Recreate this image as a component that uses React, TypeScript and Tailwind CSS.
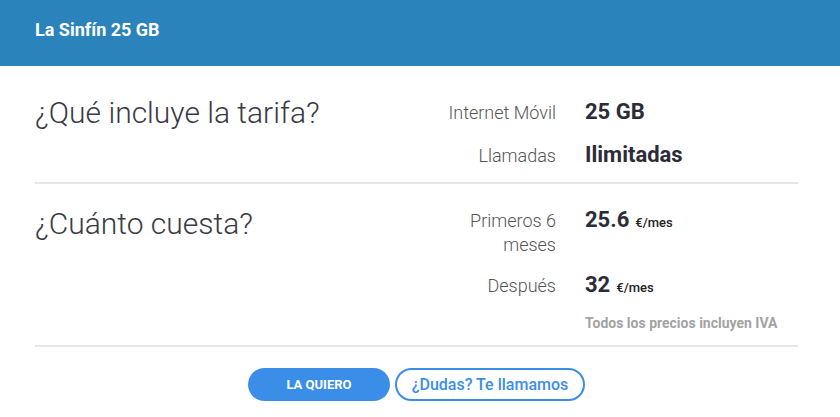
const BLUE = 'bg-[#3b8ee8]';

function Row({ label, children, className = '' }: { label: React.ReactNode; children: React.ReactNode; className?: string }) {
  return (
    <div className={`flex items-baseline ${className}`}>
      <span className="w-[136px] shrink-0 text-right text-[18px] leading-[24px] font-light text-[#555]">{label}</span>
      <div className="ml-[29px] flex items-baseline gap-[6px]">{children}</div>
    </div>
  );
}

function Value({ value, unit }: { value: string; unit?: string }) {
  return (
    <>
      <span className="text-[22px] leading-[28px] font-bold text-[#2c2c39]">{value}</span>
      {unit && <span className="text-[13px] font-medium text-[#222]">{unit}</span>}
    </>
  );
}

export default function App() {
  return (
    <div className="h-[417px] w-[840px] overflow-hidden bg-white font-['Roboto',sans-serif]">
      <header className="flex h-[66px] items-center bg-[#2b83bb] px-[35px] pb-[8px]">
        <h1 className="text-[18px] font-bold text-white">La Sinfín 25 GB</h1>
      </header>

      <div className="pl-[35px] pr-[42px]">
        <section className="flex border-b-2 border-[#e6e6e6] pt-[29px] pb-[13px]">
          <h2 className="flex-1 text-[30px] leading-[36px] font-light text-[#3a3a46]">¿Qué incluye la tarifa?</h2>
          <div className="mt-[3px] flex w-[378px] flex-col gap-[15px]">
            <Row label="Internet Móvil">
              <Value value="25 GB" />
            </Row>
            <Row label="Llamadas">
              <Value value="Ilimitadas" />
            </Row>
          </div>
        </section>

        <section className="flex border-b-2 border-[#e6e6e6] pt-[22px] pb-[14px]">
          <h2 className="flex-1 text-[30px] leading-[36px] font-light text-[#3a3a46]">¿Cuánto cuesta?</h2>
          <div className="flex w-[378px] flex-col">
            <Row label={<>Primeros 6<br />meses</>}>
              <Value value="25.6" unit="€/mes" />
            </Row>
            <Row label="Después" className="mt-[14px]">
              <Value value="32" unit="€/mes" />
            </Row>
            <p className="mt-[16px] ml-[165px] text-[14px] leading-[16px] font-bold text-[#a3a3a3]">Todos los precios incluyen IVA</p>
          </div>
        </section>

        <div className="mt-[21px] flex justify-center gap-[5px]">
          <button className={`h-[33px] w-[142px] rounded-full ${BLUE} text-[13px] font-bold text-white`}>LA QUIERO</button>
          <button className="h-[33px] w-[190px] rounded-full border-2 border-[#3b8ee8] bg-white text-[16px] font-medium text-[#3b8ee8]">¿Dudas? Te llamamos</button>
        </div>
      </div>
    </div>
  );
}
